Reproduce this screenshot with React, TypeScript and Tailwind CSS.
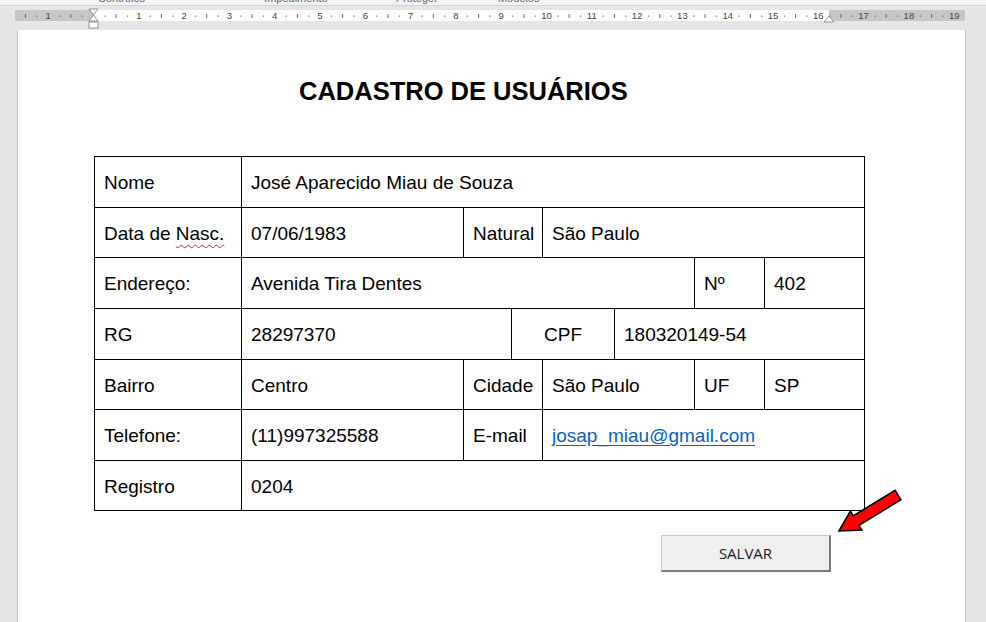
import React from 'react';

type Cell = { w: number; text?: string; kind?: 'label' | 'value' | 'link' | 'center' | 'squiggle' };

const rows: { h: number; cells: Cell[] }[] = [
    { h: 51, cells: [{ w: 147, text: 'Nome' }, { w: 623, text: 'José Aparecido Miau de Souza' }] },
    {
        h: 50,
        cells: [
            { w: 147, text: 'Data de Nasc.', kind: 'squiggle' },
            { w: 222, text: '07/06/1983' },
            { w: 79, text: 'Natural' },
            { w: 322, text: 'São Paulo' },
        ],
    },
    {
        h: 51,
        cells: [
            { w: 147, text: 'Endereço:' },
            { w: 453, text: 'Avenida Tira Dentes' },
            { w: 70, text: 'Nº' },
            { w: 100, text: '402' },
        ],
    },
    {
        h: 51,
        cells: [
            { w: 147, text: 'RG' },
            { w: 270, text: '28297370' },
            { w: 103, text: 'CPF', kind: 'center' },
            { w: 250, text: '180320149-54' },
        ],
    },
    {
        h: 50,
        cells: [
            { w: 147, text: 'Bairro' },
            { w: 222, text: 'Centro' },
            { w: 79, text: 'Cidade' },
            { w: 152, text: 'São Paulo' },
            { w: 70, text: 'UF' },
            { w: 100, text: 'SP' },
        ],
    },
    {
        h: 51,
        cells: [
            { w: 147, text: 'Telefone:' },
            { w: 222, text: '(11)997325588' },
            { w: 79, text: 'E-mail' },
            { w: 322, text: 'josap_miau@gmail.com', kind: 'link' },
        ],
    },
    { h: 50, cells: [{ w: 147, text: 'Registro' }, { w: 623, text: '0204' }] },
];

const Ruler = () => {
    const zero = 93.5;
    const cm = 45.3;
    const nums: { x: number; label: string }[] = [{ x: zero - cm, label: '1' }];
    for (let k = 1; k <= 19; k++) nums.push({ x: zero + cm * k, label: String(k) });
    const ticks: React.ReactNode[] = [];
    for (let k = -2; k <= 19; k++) {
        const base = zero + cm * k;
        [0.25, 0.5, 0.75].forEach((f, i) => {
            const x = base + cm * f;
            if (x < 17 || x > 963) return;
            if (i === 1) {
                ticks.push(<rect key={`${k}-${i}`} x={x - 0.5} y={8} width={1} height={4} fill="#6b6b6b" />);
            } else {
                ticks.push(<rect key={`${k}-${i}`} x={x - 0.5} y={9.5} width={1.2} height={1.2} fill="#6b6b6b" />);
            }
        });
    }
    return (
        <svg width={986} height={24} className="block">
            <rect x={15} y={4} width={78} height={11} fill="#c6c6c6" />
            <rect x={93} y={4} width={736} height={11} fill="#ffffff" />
            <rect x={829} y={4} width={136} height={11} fill="#c6c6c6" />
            {ticks}
            {nums.map((n) => (
                <text
                    key={n.label + n.x}
                    x={n.x}
                    y={13}
                    textAnchor="middle"
                    fontSize={9.5}
                    fill="#444"
                    fontFamily="'Liberation Sans', Arial, sans-serif"
                >
                    {n.label}
                </text>
            ))}
            {/* indent markers */}
            <path d="M89 3 L98 3 L93.5 9 Z" fill="#fff" stroke="#7a7a7a" strokeWidth={0.8} />
            <path d="M93.5 9 L98 15 L89 15 Z" fill="#fff" stroke="#7a7a7a" strokeWidth={0.8} />
            <rect x={89} y={16} width={9} height={6} fill="#fff" stroke="#7a7a7a" strokeWidth={0.8} />
            <path d="M829 10 L834 16 L824 16 Z" fill="#fff" stroke="#7a7a7a" strokeWidth={0.8} />
        </svg>
    );
};

const Arrow = () => (
    <svg width={80} height={56} className="absolute left-[811px] top-[454px]">
        <polygon
            points="10,47 32.8,46 30,41.3 71.9,15.7 66.1,6.3 24.2,31.9 21.4,27.2"
            fill="#ff0000"
            stroke="#000"
            strokeWidth={1.6}
            strokeLinejoin="miter"
        />
    </svg>
);

export default function App() {
    return (
        <div className="w-[986px] h-[622px] overflow-hidden bg-[#e6e6e6] font-['Liberation_Sans',Arial,sans-serif]">
            <div className="h-[6px] overflow-hidden bg-[#f3f3f3] border-b border-[#d4d4d4] relative">
                <div className="flex text-[11px] text-[#666] leading-none -translate-y-[7px]">
                    <span className="ml-[98px]">Controles</span>
                    <span className="ml-[119px]">Impedimento</span>
                    <span className="ml-[68px]">Proteger</span>
                    <span className="ml-[60px]">Modelos</span>
                </div>
            </div>
            <Ruler />
            <div className="relative ml-[17px] w-[948px] h-[600px] bg-white border-l border-[#c8c8c8] shadow-[1px_0_0_#c4c4c4]">
                <h1 className="ml-[281px] pt-[46px] text-[25.5px] leading-[30px] font-bold text-black">
                    CADASTRO DE USUÁRIOS
                </h1>
                <div className="ml-[76px] mt-[50px] w-[771px] border-l border-t border-black">
                    {rows.map((row, ri) => (
                        <div key={ri} className="flex" style={{ height: row.h }}>
                            {row.cells.map((c, ci) => (
                                <div
                                    key={ci}
                                    className={`flex items-center pt-[3px] border-r border-b border-black text-[19px] text-black ${
                                        c.kind === 'center' ? 'justify-center' : 'pl-[9px]'
                                    }`}
                                    style={{ width: c.w }}
                                >
                                    {c.kind === 'link' ? (
                                        <span className="text-[#0563c1] underline underline-offset-[3px]">{c.text}</span>
                                    ) : c.kind === 'squiggle' ? (
                                        <span>
                                            Data de{' '}
                                            <span className="underline decoration-wavy decoration-[#e02020] decoration-1 underline-offset-[4px]">
                                                Nasc.
                                            </span>
                                        </span>
                                    ) : (
                                        c.text
                                    )}
                                </div>
                            ))}
                        </div>
                    ))}
                </div>
                <button className="ml-[643px] mt-[24px] w-[170px] h-[37px] bg-[#efefef] border border-[#c9c9c9] border-r-[#7b7b7b] border-b-[#7b7b7b] border-r-2 border-b-2 text-[15px] text-[#1a1a2a] font-['Open_Sans',sans-serif]">
                    SALVAR
                </button>
                <Arrow />
            </div>
        </div>
    );
}
